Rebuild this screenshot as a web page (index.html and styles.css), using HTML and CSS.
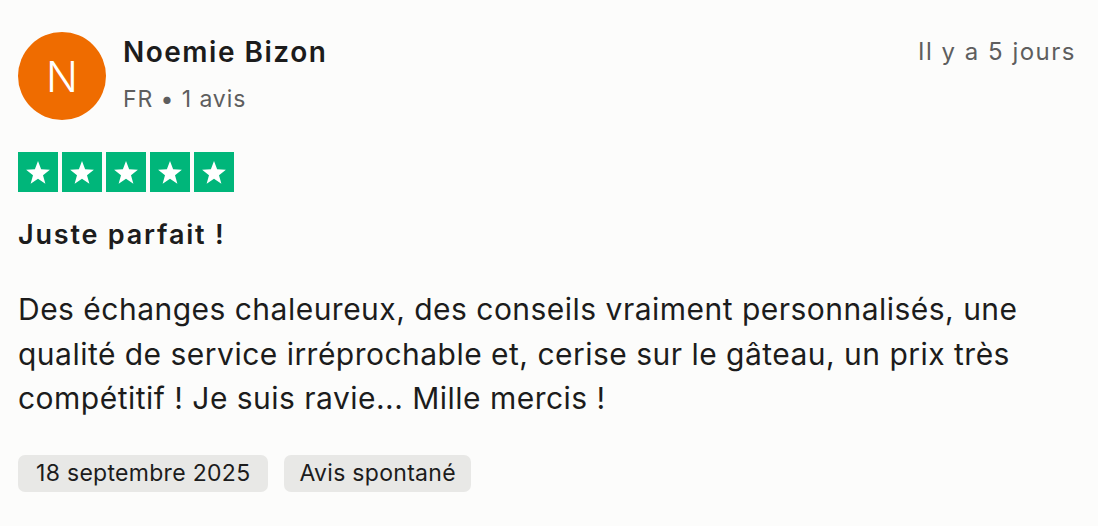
FILE: index.html
```html
<!DOCTYPE html>
<html lang="fr">
<head>
    <meta charset="UTF-8">
    <meta name="viewport" content="width=device-width, initial-scale=1.0">
    <title>Avis - Noemie Bizon</title>
    <link rel="stylesheet" href="styles.css">
</head>
<body>
    <div class="review">
        <!-- Header: avatar, name, date -->
        <div class="review-header">
            <div class="avatar">N</div>
            <div class="consumer">
                <div class="consumer-name">Noemie Bizon</div>
                <div class="consumer-meta">FR • 1 avis</div>
            </div>
            <div class="review-date">Il y a 5 jours</div>
        </div>

        <!-- Stars -->
        <div class="stars">
            <span class="star"><svg viewBox="0 0 24 24"><path d="M12 3.2l2.5 6.6 7 .3-5.5 4.4 1.9 6.8L12 17.4l-5.9 3.9 1.9-6.8-5.5-4.4 7-.3z"/></svg></span>
            <span class="star"><svg viewBox="0 0 24 24"><path d="M12 3.2l2.5 6.6 7 .3-5.5 4.4 1.9 6.8L12 17.4l-5.9 3.9 1.9-6.8-5.5-4.4 7-.3z"/></svg></span>
            <span class="star"><svg viewBox="0 0 24 24"><path d="M12 3.2l2.5 6.6 7 .3-5.5 4.4 1.9 6.8L12 17.4l-5.9 3.9 1.9-6.8-5.5-4.4 7-.3z"/></svg></span>
            <span class="star"><svg viewBox="0 0 24 24"><path d="M12 3.2l2.5 6.6 7 .3-5.5 4.4 1.9 6.8L12 17.4l-5.9 3.9 1.9-6.8-5.5-4.4 7-.3z"/></svg></span>
            <span class="star"><svg viewBox="0 0 24 24"><path d="M12 3.2l2.5 6.6 7 .3-5.5 4.4 1.9 6.8L12 17.4l-5.9 3.9 1.9-6.8-5.5-4.4 7-.3z"/></svg></span>
        </div>

        <h2 class="review-title">Juste parfait !</h2>

        <p class="review-text">Des échanges chaleureux, des conseils vraiment personnalisés, une qualité de service irréprochable et, cerise sur le gâteau, un prix très compétitif ! Je suis ravie... Mille mercis !</p>

        <div class="tags">
            <span class="tag">18 septembre 2025</span>
            <span class="tag">Avis spontané</span>
        </div>
    </div>
</body>
</html>
```

FILE: styles.css
```css
body {
    margin: 0;
    padding: 0;
    background-color: #fcfcfb;
    font-family: Inter, "Noto Sans", sans-serif;
    color: #1c1c1c;
}
.review {
    padding: 32px 22px 0 18px;
}
.review-header {
    display: flex;
    align-items: flex-start;
}
.avatar {
    width: 88px;
    height: 88px;
    border-radius: 50%;
    background-color: #ef6c00;
    color: #fff;
    font-size: 42px;
    font-weight: 300;
    display: flex;
    align-items: center;
    justify-content: center;
    flex-shrink: 0;
}
.consumer {
    margin-left: 17px;
    flex: 1;
}
.consumer-name {
    font-size: 28px;
    font-weight: 600;
    letter-spacing: 1.5px;
    line-height: 36px;
    margin-top: 2px;
}
.consumer-meta {
    font-size: 23px;
    letter-spacing: 0.9px;
    color: #5e5e5e;
    line-height: 30px;
    margin-top: 14px;
}
.review-date {
    font-size: 24px;
    letter-spacing: 1.5px;
    color: #5e5e5e;
    line-height: 36px;
    margin-top: 2px;
}
.stars {
    display: flex;
    gap: 4px;
    margin-top: 32px;
}
.star {
    width: 40px;
    height: 40px;
    background-color: #00b67a;
    display: flex;
    align-items: center;
    justify-content: center;
}
.star svg {
    width: 30px;
    height: 30px;
    fill: #fff;
}
.review-title {
    font-size: 27px;
    font-weight: 600;
    letter-spacing: 1.8px;
    margin: 26px 0 0 0;
    line-height: 34px;
}
.review-text {
    font-size: 30px;
    letter-spacing: 0.48px;
    line-height: 44.5px;
    margin: 35px 0 0 0;
}
.tags {
    display: flex;
    gap: 16px;
    margin-top: 34px;
}
.tag {
    background-color: #e8e8e6;
    border-radius: 7px;
    font-size: 23px;
    letter-spacing: 0.3px;
    line-height: 37px;
    padding: 0 18px;
}
.tag + .tag {
    padding: 0 15px;
}
```
